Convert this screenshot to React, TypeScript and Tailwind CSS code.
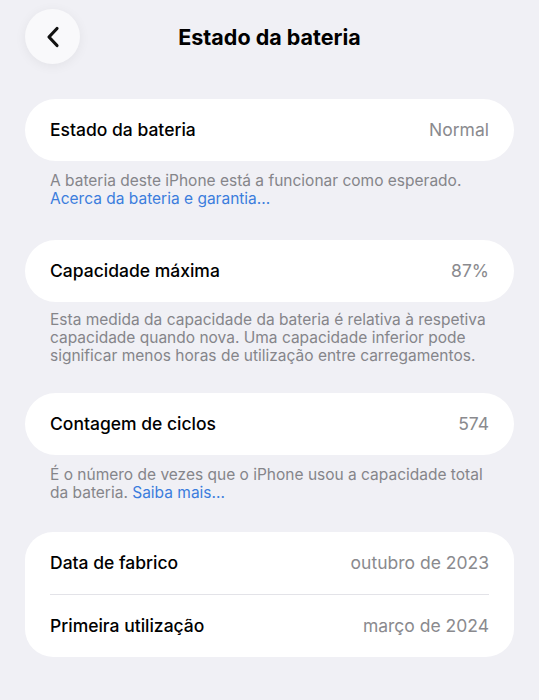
import type { FC, ReactNode } from 'react'

const font = { fontFamily: 'Inter, "Noto Sans", sans-serif' }

interface RowProps {
  label: string
  value: string
}

const Row: FC<RowProps> = ({ label, value }) => (
  <div className="flex h-[62px] items-center justify-between px-[25px]">
    <span className="text-[17.5px] font-medium text-black">{label}</span>
    <span className="text-[17.5px] text-[#8a8a8e]">{value}</span>
  </div>
)

const Footer: FC<{ children: ReactNode; className?: string }> = ({ children, className }) => (
  <p className={`px-[25px] text-[15.5px] leading-[18px] text-[#85858a] ${className ?? ''}`}>{children}</p>
)

export default function App() {
  return (
    <div className="min-h-[700px] w-full bg-[#f0f0f5]" style={font}>
      <div className="relative flex h-[74px] items-center justify-center">
        <button className="absolute left-[25px] top-[9px] flex h-[55px] w-[55px] items-center justify-center rounded-full bg-[#f9f9fb] shadow-[0_2px_12px_rgba(0,0,0,0.06)]">
          <svg width="14" height="22" viewBox="0 0 14 22" fill="none">
            <path d="M11 2.5 3 11l8 8.5" stroke="#111" strokeWidth="3.2" strokeLinecap="round" strokeLinejoin="round" />
          </svg>
        </button>
        <h1 className="text-[21.5px] font-bold text-black">Estado da bateria</h1>
      </div>

      <div className="mx-[25px] mt-[25px]">
        <div className="rounded-full bg-white">
          <Row label="Estado da bateria" value="Normal" />
        </div>
        <Footer className="mt-[11px]">
          A bateria deste iPhone está a funcionar como esperado.
          <br />
          <span className="text-[#3b7ddd]">Acerca da bateria e garantia...</span>
        </Footer>

        <div className="mt-[32px] rounded-full bg-white">
          <Row label="Capacidade máxima" value="87%" />
        </div>
        <Footer className="mt-[9px]">
          Esta medida da capacidade da bateria é relativa à respetiva capacidade quando nova. Uma capacidade inferior pode
          significar menos horas de utilização entre carregamentos.
        </Footer>

        <div className="mt-[28px] rounded-full bg-white">
          <Row label="Contagem de ciclos" value="574" />
        </div>
        <Footer className="mt-[11px]">
          É o número de vezes que o iPhone usou a capacidade total da bateria.{' '}
          <span className="text-[#3b7ddd]">Saiba mais...</span>
        </Footer>

        <div className="mt-[30px] rounded-[28px] bg-white">
          <Row label="Data de fabrico" value="outubro de 2023" />
          <div className="mx-[25px] h-px bg-[#e3e3e8]" />
          <Row label="Primeira utilização" value="março de 2024" />
        </div>
      </div>
    </div>
  )
}
